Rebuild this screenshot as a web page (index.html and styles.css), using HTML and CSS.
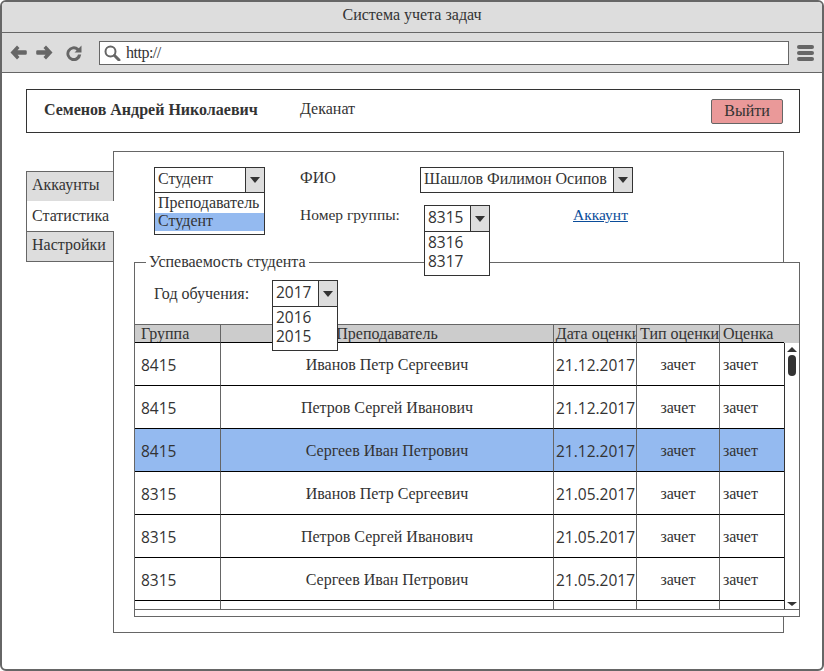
FILE: index.html
```html
<!DOCTYPE html>
<html>
<head>
  <title>Система учета задач</title>
  <link rel="stylesheet" href="styles.css">
</head>
<body>
  <div class="window">
    <div class="titlebar">Система учета задач</div>
    <div class="toolbar">
      <svg class="nav-icon back" width="17" height="15" viewBox="0 0 17 15"><path d="M7 .5 .5 7.500 7 14.500 9.500 12 7.500 9.800H15.500Q16.800 9.800 16.800 8.500V6.500Q16.800 5.200 15.500 5.200H7.500L9.500 3Z"/></svg>
      <svg class="nav-icon forward" width="17" height="15" viewBox="0 0 17 15"><path d="M10 .5 16.500 7.500 10 14.500 7.500 12 9.500 9.800H1.500Q.2 9.800 .2 8.500V6.500Q.2 5.200 1.500 5.200H9.500L7.500 3Z"/></svg>
      <svg class="nav-icon reload" width="16" height="16" viewBox="0 0 16 16"><path d="M12.800 3.200A7.400 7.400 0 1 0 15.200 9.500H12A4.400 4.400 0 1 1 10.600 5.400L8.500 7.500H15.500V.5Z"/></svg>
      <div class="address">
        <svg class="search" width="17" height="16" viewBox="0 0 17 16"><circle cx="6.500" cy="6.500" r="5" fill="none" stroke="#666" stroke-width="2"/><path d="M10.500 10.500 15 15" stroke="#666" stroke-width="3" stroke-linecap="round"/></svg>
        <span class="url">http://</span>
      </div>
      <div class="burger"><i></i><i></i><i></i></div>
    </div>

    <div class="content">
      <div class="userbar">
        <b class="username">Семенов Андрей Николаевич</b>
        <span class="dept">Деканат</span>
        <button class="logout">Выйти</button>
      </div>

      <div class="main">
        <div class="tabs">
          <div class="tab">Аккаунты</div>
          <div class="tab active">Статистика</div>
          <div class="tab">Настройки</div>
        </div>

        <div class="panel">
          <div class="filters">
            <div class="combo combo-role">
              <div class="combo-value">Студент</div>
              <div class="combo-btn"><i></i></div>
              <div class="combo-list">
                <div>Преподаватель</div>
                <div class="selected">Студент</div>
              </div>
            </div>
            <div class="filter-rows">
              <div class="filter-row">
                <span class="label-fio">ФИО</span>
                <div class="combo combo-fio">
                  <div class="combo-value">Шашлов Филимон Осипов</div>
                  <div class="combo-btn"><i></i></div>
                </div>
              </div>
              <div class="filter-row row-group">
                <span class="label-group">Номер группы:</span>
                <div class="combo combo-num">
                  <div class="combo-value">8315</div>
                  <div class="combo-btn"><i></i></div>
                  <div class="combo-list">
                    <div>8316</div>
                    <div>8317</div>
                  </div>
                </div>
                <a class="account-link" href="#">Аккаунт</a>
              </div>
            </div>
          </div>

          <fieldset class="grades">
            <legend>Успеваемость студента</legend>
            <div class="year-row">
              <span class="label-year">Год обучения:</span>
              <div class="combo combo-num">
                <div class="combo-value">2017</div>
                <div class="combo-btn"><i></i></div>
                <div class="combo-list">
                  <div>2016</div>
                  <div>2015</div>
                </div>
              </div>
            </div>

            <div class="table-wrap">
              <table class="grades-table">
                <colgroup>
                  <col class="c-group"><col class="c-teacher"><col class="c-date"><col class="c-type"><col class="c-mark">
                </colgroup>
                <thead>
                  <tr>
                    <th class="left">Группа</th>
                    <th>Преподаватель</th>
                    <th class="date-head"><span>Дата оценки</span></th>
                    <th class="left">Тип оценки</th>
                    <th class="left">Оценка</th>
                  </tr>
                </thead>
                <tbody>
                  <tr><td class="num">8415</td><td>Иванов Петр Сергеевич</td><td class="date">21.12.2017</td><td>зачет</td><td class="left">зачет</td></tr>
                  <tr><td class="num">8415</td><td>Петров Сергей Иванович</td><td class="date">21.12.2017</td><td>зачет</td><td class="left">зачет</td></tr>
                  <tr class="selected"><td class="num">8415</td><td>Сергеев Иван Петрович</td><td class="date">21.12.2017</td><td>зачет</td><td class="left">зачет</td></tr>
                  <tr><td class="num">8315</td><td>Иванов Петр Сергеевич</td><td class="date">21.05.2017</td><td>зачет</td><td class="left">зачет</td></tr>
                  <tr><td class="num">8315</td><td>Петров Сергей Иванович</td><td class="date">21.05.2017</td><td>зачет</td><td class="left">зачет</td></tr>
                  <tr><td class="num">8315</td><td>Сергеев Иван Петрович</td><td class="date">21.05.2017</td><td>зачет</td><td class="left">зачет</td></tr>
                  <tr class="stub"><td></td><td></td><td></td><td></td><td></td></tr>
                </tbody>
              </table>
              <div class="scroll-col">
                <div class="scroll-head"></div>
                <div class="scrollbar">
                  <i class="arrow-up"></i>
                  <i class="thumb"></i>
                  <i class="arrow-down"></i>
                </div>
              </div>
            </div>
          </fieldset>
        </div>
      </div>
    </div>
  </div>
</body>
</html>
```

FILE: styles.css
```css
* {
  box-sizing: border-box;
}
html, body {
  margin: 0;
  height: 100%;
  background: white;
}
body {
  font-family: "Liberation Serif", serif;
  font-size: 16px;
  color: #333;
  overflow: hidden;
}
.window {
  width: 824px;
  height: 671px;
  border: 2px solid #666;
  border-radius: 6px;
  overflow: hidden;
}
.titlebar {
  height: 31px;
  background: #ddd;
  border-bottom: 1px solid #666;
  text-align: center;
  line-height: 25px;
}
.toolbar {
  height: 40px;
  background: #ddd;
  border-bottom: 1px solid #666;
  display: flex;
  align-items: center;
  padding: 0 8px;
}
.nav-icon {
  fill: #666;
  flex: none;
}
.forward {
  margin-left: 9px;
}
.reload {
  margin-left: 13px;
  margin-right: 17px;
}
.address {
  flex: none;
  width: 690px;
  height: 24px;
  border: 1px solid #666;
  background: white;
  display: flex;
  align-items: center;
  padding-left: 4px;
  gap: 5px;
}
.url {
  letter-spacing: -.5px;
}
.burger {
  margin-left: 8px;
  width: 18px;
  margin-top: 2px;
}
.burger i {
  display: block;
  height: 4px;
  background: #666;
  border-radius: 2px;
  margin-bottom: 2px;
}
.content {
  padding: 16px 0 0 24px;
}
.userbar {
  width: 774px;
  height: 44px;
  border: 1px solid #333;
  display: flex;
  align-items: center;
  padding-left: 17px;
}
.username {
  width: 256px;
  margin-top: -3px;
}
.dept {
  margin-top: -5px;
}
.logout {
  margin-left: auto;
  margin-right: 16px;
  margin-top: 1px;
  width: 72px;
  height: 25px;
  background: #ea9999;
  border: 1px solid #666;
  border-radius: 2px;
  font: inherit;
  color: #333;
  padding: 0 0 2px;
}
.main {
  display: flex;
  align-items: flex-start;
  margin-top: 18px;
}
.tabs {
  width: 88px;
  margin-top: 20px;
  margin-right: -1px;
  position: relative;
  z-index: 1;
}
.tab {
  height: 31px;
  margin-bottom: -1px;
  background: #ddd;
  border: 1px solid #666;
  padding-left: 5px;
  line-height: 25px;
}
.tab.active {
  background: white;
  border-right: 0;
  border-top: 0;
  border-bottom: 0;
  height: 30px;
  margin-bottom: 0;
  line-height: 29px;
}
.panel {
  width: 671px;
  height: 482px;
  border: 1px solid #666;
  padding: 15px 0 0 20px;
}
.filters {
  display: flex;
  height: 87px;
  padding-left: 20px;
}
.combo {
  position: relative;
  display: flex;
  height: 26px;
  border: 1px solid #333;
  background: white;
}
.combo-value {
  flex: 1;
  line-height: 21px;
  padding-left: 3px;
  white-space: nowrap;
}
.combo-btn {
  width: 19px;
  background: #ddd;
  border-left: 1px solid #333;
  display: flex;
  align-items: center;
  justify-content: center;
}
.combo-btn i {
  width: 0;
  height: 0;
  border-left: 5px solid transparent;
  border-right: 5px solid transparent;
  border-top: 6px solid #333;
}
.combo-list {
  position: absolute;
  top: 24px;
  left: -1px;
  right: -1px;
  background: white;
  border: 1px solid #333;
  z-index: 2;
  padding-top: 1px;
  padding-bottom: 3px;
}
.combo-role {
  width: 111px;
}
.combo-role .combo-list div {
  padding-left: 3px;
  line-height: 18px;
}
.combo-role .combo-list div:first-child {
  margin-bottom: 1px;
}
.combo-role .combo-list .selected {
  background: #94baf0;
  line-height: 16px;
  padding-bottom: 2px;
}
.filter-rows {
  margin-left: 35px;
}
.filter-row {
  display: flex;
  align-items: center;
}
.label-fio {
  width: 120px;
  margin-top: -5px;
}
.combo-fio {
  width: 213px;
}
.row-group {
  margin-top: 12px;
}
.label-group {
  width: 124px;
  margin-top: -7px;
  font-size: 15.5px;
}
.combo-num {
  width: 66px;
  height: 27px;
  font-family: "Open Sans", sans-serif;
  font-size: 15.5px;
}
.combo-num .combo-value {
  line-height: 23px;
}
.combo-num .combo-list {
  top: 25px;
  line-height: 19px;
  padding: 1px 0 4px 3px;
}
.account-link {
  margin-left: 83px;
  color: #0b4d9a;
  margin-top: -7px;
  font-size: 15.5px;
}
.grades {
  width: 666px;
  height: 363px;
  margin: 0;
  padding: 0;
  border: 1px solid #666;
  background: white;
  position: relative;
}
.grades legend {
  margin-left: 11px;
  padding: 0 3px 2px;
  line-height: 15px;
}
.year-row {
  display: flex;
  align-items: center;
  height: 27px;
  margin-top: 9px;
  padding-left: 19px;
}
.label-year {
  width: 118px;
  margin-top: 1px;
}
.table-wrap {
  display: flex;
  margin-top: 17px;
  height: 286px;
  border-top: 1px solid #666;
  border-bottom: 1px solid #666;
  overflow: hidden;
}
.grades-table {
  table-layout: fixed;
  border-collapse: separate;
  border-spacing: 0;
  width: 649px;
}
.c-group { width: 85px; }
.c-teacher { width: 333px; }
.c-date { width: 83px; }
.c-type { width: 83px; }
.c-mark { width: 65px; }
.grades-table th {
  height: 18px;
  background: #ccc;
  font-weight: normal;
  padding: 0;
  border-left: 1px solid #666;
  border-bottom: 1px solid #000;
  white-space: nowrap;
  overflow: hidden;
  line-height: 17px;
  text-align: center;
}
.grades-table th:first-child,
.grades-table td:first-child {
  border-left: 0;
}
.grades-table th.left {
  text-align: left;
  padding-left: 3px;
}
.grades-table th:first-child {
  padding-left: 6px;
}
.date-head span {
  display: block;
  margin-left: -1px;
  width: 90px;
}
.grades-table td {
  height: 43px;
  padding: 2px 0 0;
  border-left: 1px solid #666;
  border-bottom: 1px solid #000;
  text-align: center;
  white-space: nowrap;
  overflow: hidden;
}
.grades-table td.num {
  font-family: "Open Sans", sans-serif;
  font-size: 15.5px;
  text-align: left;
  padding-left: 6px;
}
.grades-table td.date {
  font-family: "Open Sans", sans-serif;
  font-size: 15.5px;
  text-align: left;
  padding-left: 2px;
}
.grades-table td.left {
  text-align: left;
  padding-left: 3px;
}
.grades-table tr.selected td {
  background: #94baf0;
}
.grades-table tr.stub td {
  height: 8px;
  padding: 0;
  border-bottom: 0;
}
.scroll-col {
  width: 15px;
  display: flex;
  flex-direction: column;
}
.scroll-head {
  height: 18px;
  background: #ccc;
  flex: none;
}
.scrollbar {
  flex: 1;
  border-left: 1px solid #333;
  display: flex;
  flex-direction: column;
  align-items: center;
}
.scrollbar i {
  display: block;
}
.arrow-up {
  margin-top: 4px;
  border-left: 5px solid transparent;
  border-right: 5px solid transparent;
  border-bottom: 5px solid #333;
}
.thumb {
  width: 8px;
  height: 21px;
  margin-top: 3px;
  background: #333;
  border-radius: 4px;
}
.arrow-down {
  margin-top: auto;
  margin-bottom: 3px;
  border-left: 5px solid transparent;
  border-right: 5px solid transparent;
  border-top: 4px solid #333;
}
```
